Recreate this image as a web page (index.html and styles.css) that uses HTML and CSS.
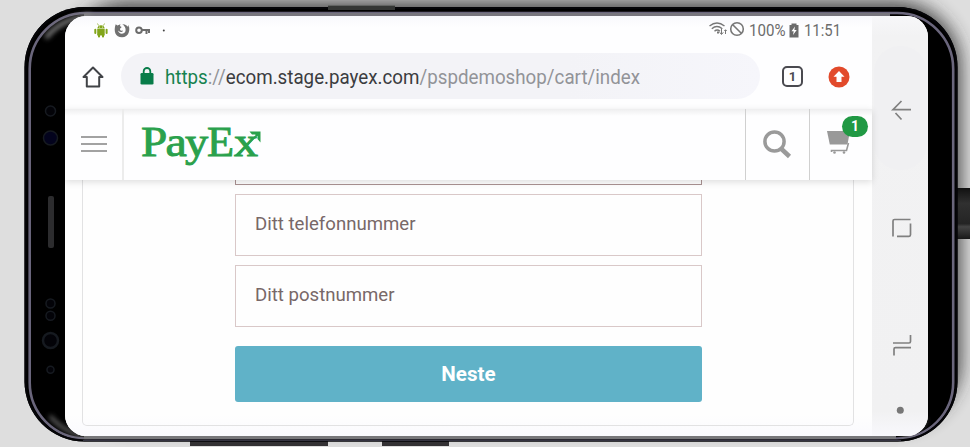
FILE: index.html
```html
<!DOCTYPE html>
<html lang="nb">
<head>
<meta charset="utf-8">
<title>PayEx</title>
<link rel="stylesheet" href="styles.css">
</head>
<body>
<div class="stage">
<svg class="phone" width="970" height="447" viewBox="0 0 970 447" aria-hidden="true">
  <defs>
    <filter id="soft" x="-10%" y="-20%" width="120%" height="140%"><feGaussianBlur stdDeviation="9"/></filter>
    <filter id="slight"><feGaussianBlur stdDeviation="0.7"/></filter>
    <filter id="glow" x="-30%" y="-30%" width="160%" height="160%"><feGaussianBlur stdDeviation="2.5"/></filter>
    <linearGradient id="cable" x2="0" y2="1"><stop offset="0" stop-color="#111"/><stop offset=".3" stop-color="#303030"/><stop offset=".7" stop-color="#242424"/><stop offset=".76" stop-color="#444"/><stop offset="1" stop-color="#181818"/></linearGradient>
    <clipPath id="body"><rect x="24.500" y="7" width="933" height="434.500" rx="60"/></clipPath>
  </defs>
  <rect width="970" height="447" fill="#dedede"/>
  <rect x="62" y="1" width="899" height="426" rx="66" fill="#333" opacity=".85" filter="url(#soft)"/>
  <rect x="956" y="188" width="14" height="51" fill="url(#cable)"/>
  <rect x="190" y="440" width="138" height="6" fill="#333134"/>
  <rect x="382" y="440" width="67" height="6" fill="#333134"/>
  <rect x="24.500" y="7" width="933" height="434.500" rx="60"/>
  <g clip-path="url(#body)">
    <rect x="29.700" y="13" width="923.500" height="425.500" rx="56" fill="none" stroke="#6b667c" stroke-width="2.600" filter="url(#slight)"/>
    <rect x="84" y="13" width="806" height="4" fill="#77757d"/>
    <rect x="84" y="436" width="812" height="3" fill="#77777a"/>
    <path d="M46 38Q60 19 91 15" fill="none" stroke="#888" stroke-width="4" filter="url(#glow)"/>
    <path d="M50 416Q64 433 88 437M926 420Q917 432 901 438" fill="none" stroke="#777" stroke-width="3" filter="url(#glow)"/>
    <rect x="25" y="7.500" width="932" height="433.500" rx="60" fill="none" stroke="#050508" stroke-width="3"/>
    <path d="M83 440.500H901" stroke="#343340" stroke-width="1"/>
  </g>
  <rect x="328" y="5" width="67" height="5" fill="#343634"/>
  <rect x="328" y="5" width="67" height="1" fill="#626462"/>
  <g fill="#030308" stroke="#161a20" stroke-width="1.500">
    <circle cx="50.500" cy="111" r="5"/><circle cx="50.500" cy="138" r="7" fill="#03031d"/>
    <circle cx="50.500" cy="303.500" r="4.500"/><circle cx="50.500" cy="315.800" r="4.500"/>
    <circle cx="50.500" cy="340.500" r="7.500" stroke-width="2.500"/><circle cx="50.500" cy="369.800" r="3.500"/>
  </g>
  <rect x="48" y="196" width="6" height="52" rx="2" fill="#2c2c2e"/>
</svg>

<main class="screen">
  <div class="app">
    <div class="status">
      <svg width="80" height="22" viewBox="92 19 80 22">
        <g fill="#82a51b"><path d="M97.300 28.600a3.800 4.200 0 0 1 7.400 0zM97.200 29.100h7.500v6.300h-7.500z"/><rect x="94.300" y="28.700" width="2" height="5.300" rx="1"/><rect x="105.600" y="28.700" width="2" height="5.300" rx="1"/><rect x="98" y="33.500" width="2" height="4" rx=".8"/><rect x="102" y="33.500" width="2" height="4" rx=".8"/><path d="M98.500 25.500l-1-2M103.500 25.500l1-2" stroke="#82a51b" stroke-width=".7"/></g>
        <circle cx="99.500" cy="27.100" r=".5" fill="#fff"/><circle cx="102.500" cy="27.100" r=".5" fill="#fff"/>
        <path d="M115.700 24.200l1.700 1.200 3-1.100-.5 1.900c2 .3 2 1.200.4 2.100-.7 1.500.1 2.700 1.800 2.400l1-.2c-.7 2-3.600 2-5.100.1.600 4 6.500 4.200 7.500.5.600-2.800-.8-5.300-3.200-6.800 3.800.1 5.500 2 5.800 3l.3-2.600c2.300 5.500.3 12.300-6.300 12.500-6.600.1-8.900-5.800-6.400-13z" fill="#717171"/>
        <g fill="none" stroke="#6c6c6c" stroke-width="2"><circle cx="139" cy="30.200" r="2.800"/><path d="M142 30h8M146.500 30v4M149 30v3"/></g>
        <circle cx="163.800" cy="30.500" r="1" fill="#444"/>
      </svg>
      <div class="status-right">
        <svg width="38" height="20" viewBox="706 20 38 20" fill="none" stroke="#777" stroke-width="1.400">
          <path d="M708.500 27q7.500-6 15 0M710.800 29.700q5-4.500 10.500 0M713.500 32.200q2.700-2.500 5.500 0"/><path d="M716 33.500h2" stroke-width="2"/><path d="M720.500 30v5M718.700 33.300l1.800 2.200 1.800-2.200M724.500 35v-4M723.300 32l1.200-1.300 1.200 1.300" stroke-width="1"/>
          <circle cx="736" cy="30" r="6.300" stroke-width="1.600"/><path d="M731.500 25.500l9 9" stroke-width="1.600"/>
        </svg>
        <svg class="pct" width="38" height="22"><text x="0" y="17" textLength="36.500" lengthAdjust="spacingAndGlyphs">100%</text></svg>
        <svg class="battery" width="10" height="15" viewBox="0 0 10 15"><path d="M.5 2h2V.5h5V2h2v12.500h-9z" fill="#6a6a6a"/><path d="M6 3.500L2.500 8.200h2.200L4 12l3.700-5H5.400z" fill="#fff"/></svg>
        <svg class="clock" width="38" height="22"><text x="0" y="17" textLength="37" lengthAdjust="spacingAndGlyphs">11:51</text></svg>
      </div>
    </div>
    <div class="browser">
      <svg class="home" width="22" height="24" viewBox="0 0 22 24"><path d="M1.500 12L11 2.500l9.500 9.500h-3.300v9.500H4.800V12z" fill="none" stroke="#414347" stroke-width="2" stroke-linejoin="round"/></svg>
      <div class="url">
        <svg width="14" height="18" viewBox="0 0 14 18"><path d="M3.700 7V4.300a3.300 3.300 0 0 1 6.600 0V7" fill="none" stroke="#087c49" stroke-width="1.800"/><rect x=".5" y="6" width="13" height="11.500" rx="1.300" fill="#087c49"/></svg>
        <svg class="address" width="480" height="30"><text x="0" y="22.500" textLength="475" lengthAdjust="spacingAndGlyphs"><tspan fill="#16824f">https</tspan><tspan fill="#929398">://</tspan><tspan fill="#3b3c40">ecom.stage.payex.com</tspan><tspan fill="#929398">/pspdemoshop/cart/index</tspan></text></svg>
      </div>
      <div class="tabs">1</div>
      <svg class="update" width="22" height="22" viewBox="0 0 22 22"><circle cx="11" cy="11" r="10.500" fill="#e24a2b"/><path d="M11 5l5.500 5.800H13.500V16h-5v-5.200H5.500z" fill="#fff"/></svg>
    </div>
    <header class="shop">
      <div class="burger"><i></i><i></i><i></i></div>
      <div class="brand">
        <svg width="126" height="52" viewBox="138 119 126 52">
          <g class="wordmark"><text transform="translate(141 156) scale(1.100 1)">P</text><text transform="translate(165.500 156) scale(1.120 1)">a</text><text transform="translate(185 156) scale(1.080 1)">y</text><text transform="translate(207 156) scale(1.030 1)">E</text><text transform="translate(234 156) scale(1.120 1)">x</text></g>
          <path d="M236 155.500L258 134" stroke="#2aa14c" stroke-width="1.800"/><path d="M249.500 131.500H260.500V142.500L257.500 139V136L255 134.500H252z" fill="#2aa14c"/>
        </svg>
      </div>
      <div class="tool"><svg width="32" height="32" viewBox="0 0 32 32" fill="none" stroke="#9a9a9a"><circle cx="13.500" cy="13.500" r="9.600" stroke-width="3.500"/><path d="M20.500 21l8 7.500" stroke-width="4.500"/></svg></div>
      <div class="tool cart"><svg width="24" height="26" viewBox="0 0 24 26"><path d="M0 1h23l-2.500 13.500H2.800z" fill="#999"/><path d="M21.500 13l-2 7.500H4.500V22" fill="none" stroke="#999" stroke-width="1.600"/><circle cx="7.500" cy="22.500" r="1.300" fill="#999"/><circle cx="17" cy="22.500" r="1.300" fill="#999"/></svg><span class="badge">1</span></div>
    </header>
    <div class="content">
      <form class="panel">
        <div class="field clipped"></div>
        <div class="field"><span>Ditt telefonnummer</span></div>
        <div class="field"><span>Ditt postnummer</span></div>
        <button type="button">Neste</button>
      </form>
    </div>
  </div>
  <nav class="softkeys">
    <svg width="56" height="420" viewBox="872 16 56 420" fill="none" stroke="#808080" stroke-width="1.700">
      <rect x="874" y="46" width="53" height="124" rx="26" fill="#f0f0f2" stroke="none"/>
      <path d="M911 109.700H893L901.500 101M895.500 113l6 6.500"/>
      <path d="M893 236.500V221q0-1.500 1.500-1.500H910.500M910.500 223.500V234.800q0 1.500-1.500 1.500H897"/>
      <path d="M910.500 335V341.500q0 1.500-1.500 1.500H893M894 355.500V349q0-1.400 1.400-1.400H911"/>
      <circle cx="900.300" cy="410.300" r="3.500" fill="#777" stroke="none"/>
    </svg>
  </nav>
</main>
</div>
</body>
</html>
```

FILE: styles.css
```css
* { box-sizing: border-box; }
body { margin: 0; overflow: hidden; font-family: Roboto, sans-serif; }
.stage { position: relative; width: 970px; height: 447px; padding: 16px 42px 11px 65px; }
.phone { position: absolute; inset: 0; }
.phone + .screen { position: relative; }
svg { display: block; flex: none; overflow: visible; }
.screen { display: flex; height: 420px; overflow: hidden; border-radius: 21px; background: #fefeff; }
.app { width: 807px; display: flex; flex-direction: column; }
.status { height: 29px; padding: 3px 28px 0 27px; display: flex; justify-content: space-between; background: linear-gradient(#f8f8fc, #fefeff 12px); }
.status-right { display: flex; padding: 0 2px 0 0; }
.status text { font-size: 17px; fill: #6c6c6c; }
.pct { margin-left: 4px; }
.battery { margin: 4px 5px 0 2px; }
.browser { height: 64px; padding: 8px 22px 0 17px; display: flex; align-items: flex-start; }
.home { margin: 12px 17px 0 0; }
.url { width: 639px; height: 46px; border-radius: 23px; background: linear-gradient(90deg, #f3f3f7 70%, #f6f6fb); display: flex; align-items: center; padding-left: 19px; gap: 11px; }
.address text { font-size: 20px; }
.tabs { width: 21px; height: 21px; margin: 13px 25px 0 22px; border: 2px solid #4a4a50; border-radius: 5px; text-align: center; font: bold 13px/17px Roboto, sans-serif; color: #4a4a50; }
.update { margin-top: 13px; }
.shop { position: relative; z-index: 1; height: 71px; display: flex; background: linear-gradient(#eeeeef, #fefeff 7px); box-shadow: 0 2px 7px #0002; }
.burger { width: 59px; border-right: 2px solid #ececec; padding: 27px 0 0 16px; display: flex; flex-direction: column; gap: 5px; }
.burger i { width: 26px; height: 2px; background: #a2a2a2; }
.brand { flex: 1; padding: 10px 0 0 14px; }
.wordmark { font: 43px "Liberation Serif", serif; fill: #2aa14c; stroke: #2aa14c; stroke-width: .9px; }
.tool { width: 64px; border-left: 1px solid #d0d0d0; padding: 19px 0 0 15px; }
.cart { width: 63px; position: relative; padding: 21px 0 0 17px; }
.badge { position: absolute; left: 32px; top: 7px; width: 26px; height: 21px; border-radius: 10.5px; background: #219944; color: #fff; text-align: center; font-weight: bold; font-size: 14px; line-height: 21px; }
.content { height: 256px; padding: 0 18px 10px 17px; background: linear-gradient(#fefefe 235px, #fafafe); }
.panel { height: 246px; border: solid #e2e2e3; border-width: 0 1px 1px; border-radius: 0 0 5px 5px; padding: 0 152px; display: flex; flex-direction: column; }
.field { height: 62px; width: 467px; flex: none; border: 1px solid #d9c8c8; display: flex; align-items: center; padding: 0 0 2px 19px; margin-bottom: 9px; font-size: 18.6px; color: #786868; }
.clipped { height: 5px; border-top: 0; border-color: #aa9292; padding: 0; }
.panel button { width: 467px; height: 56px; flex: none; margin-top: 10px; border: 0; border-radius: 3px; background: #60b2c8; color: #fff; font: bold 20.6px Roboto, sans-serif; padding: 0 0 1px; }
.softkeys { width: 56px; background: linear-gradient(#f7f7f9, #f2f2f3 20px, #f1f1f2 395px, #f8f8fc); }
```
